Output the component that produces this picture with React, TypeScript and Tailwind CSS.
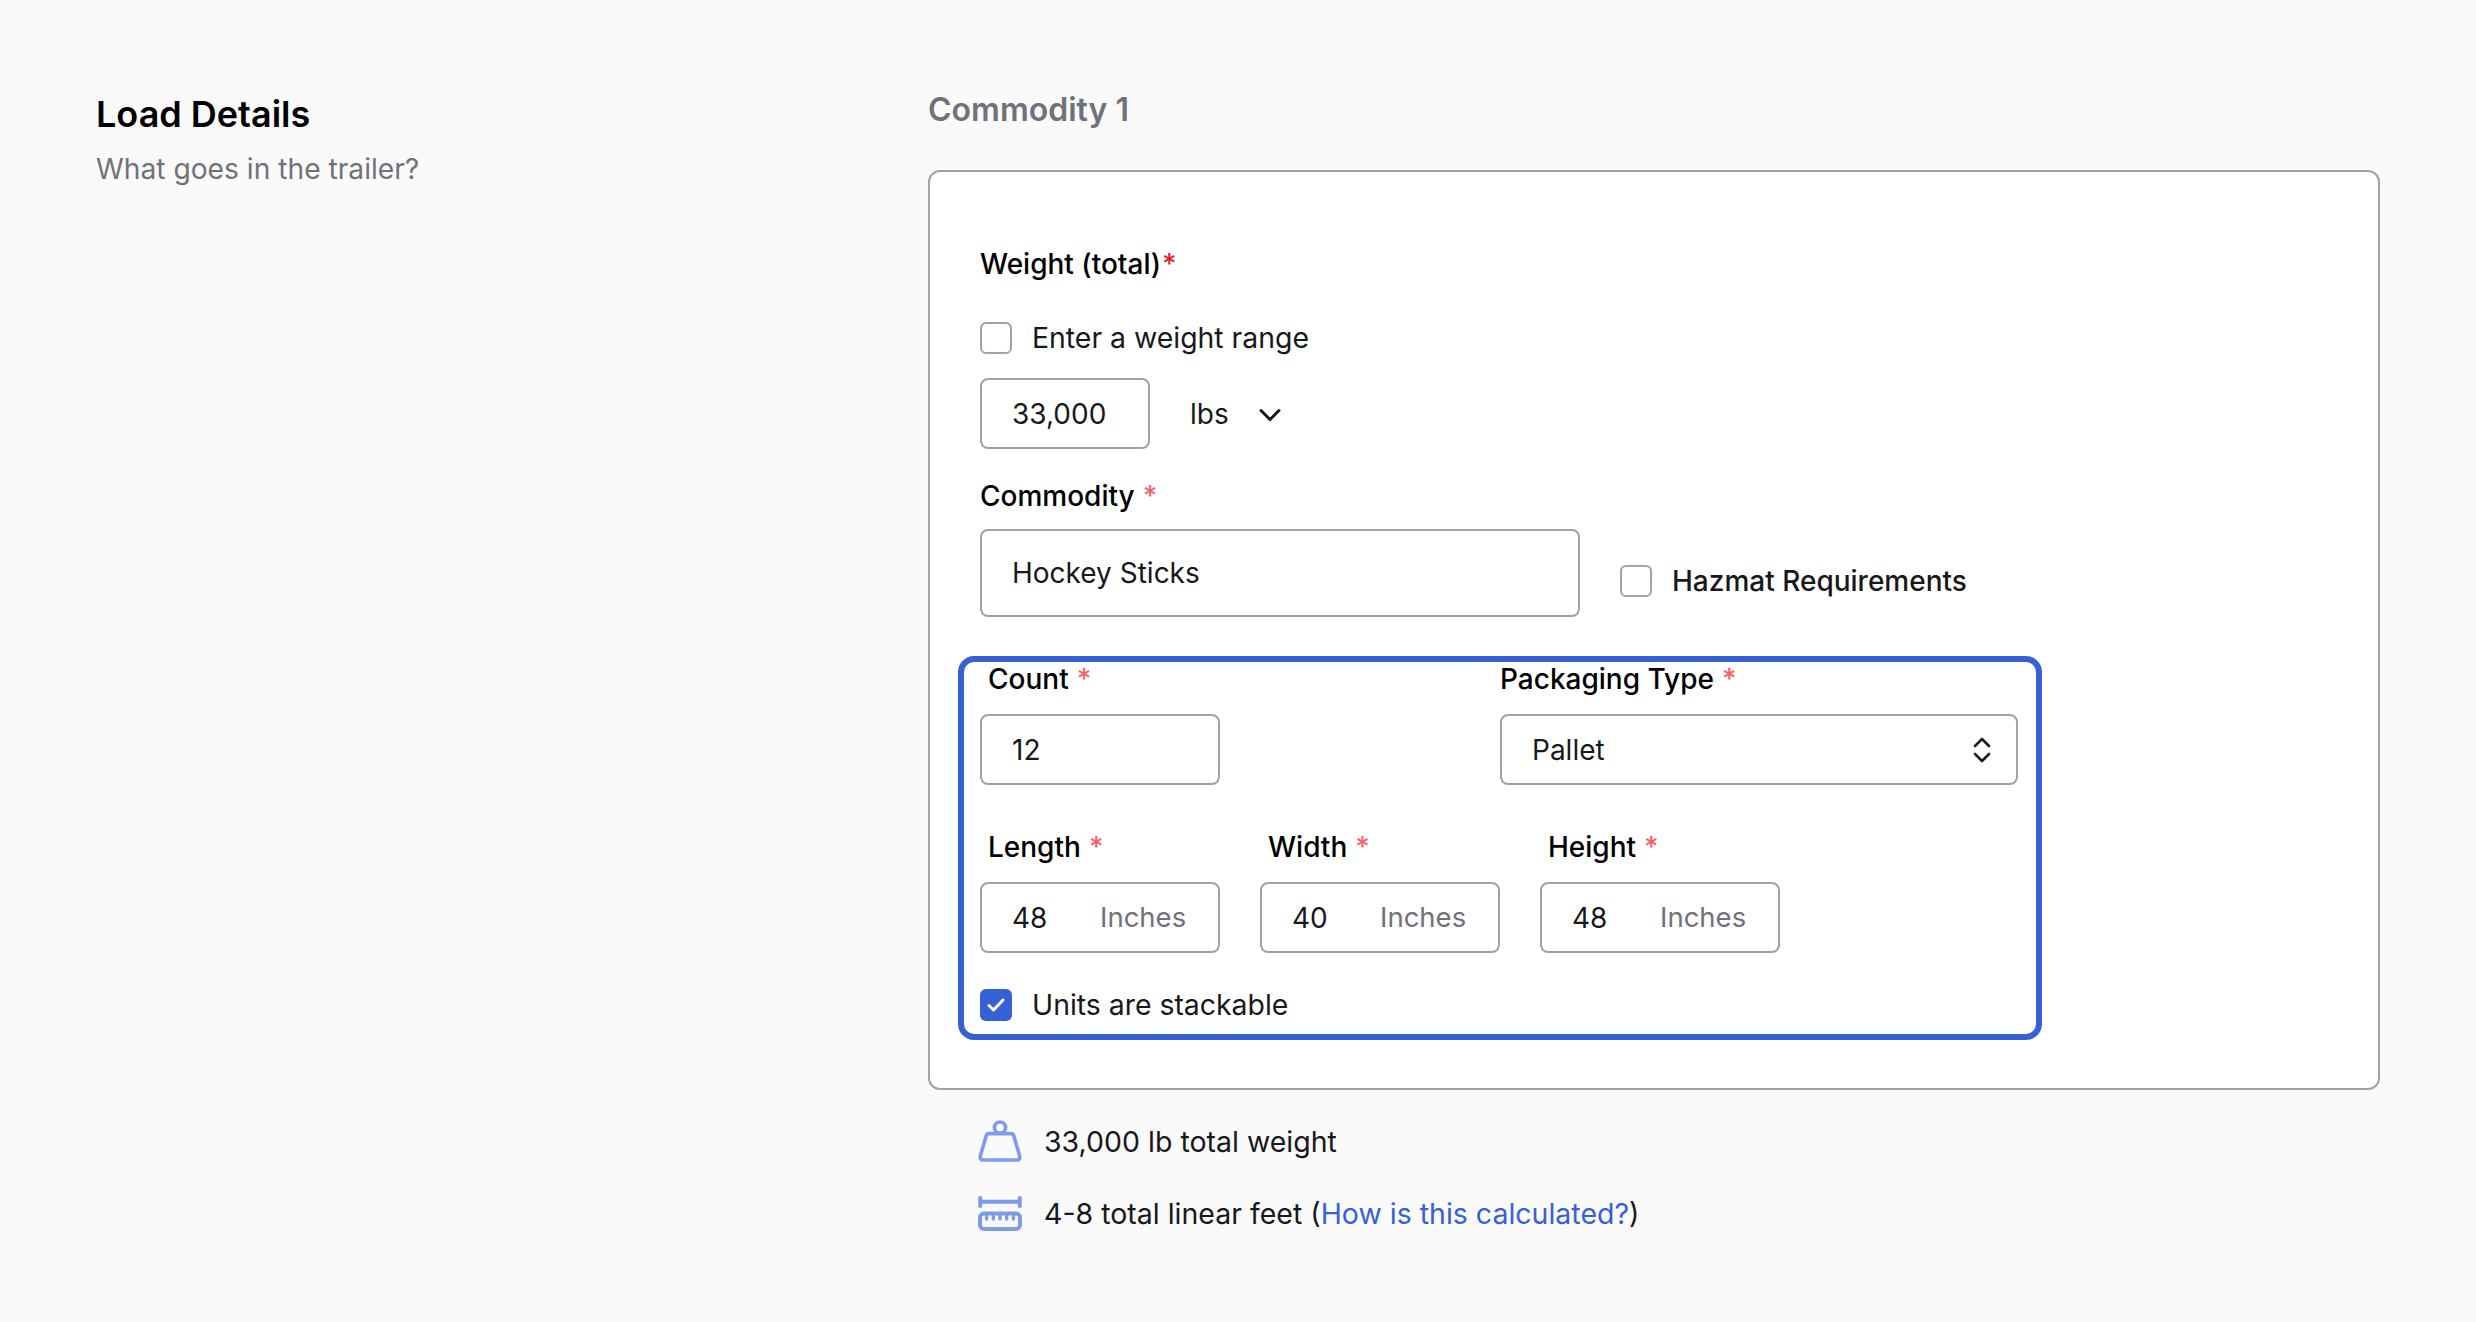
import React from "react";

function Req({ tight }: { tight?: boolean }) {
  return tight ? (
    <span className="ml-[1px] text-[#e11d2a]">*</span>
  ) : (
    <span className="ml-2 text-[#fb6068]">*</span>
  );
}

function Label({ text, className = "" }: { text: string; className?: string }) {
  return (
    <div className={`h-[35px] pl-[8px] text-[28px] leading-[35px] font-medium text-black ${className}`}>
      {text}
      <Req />
    </div>
  );
}

function Box({ value, className = "" }: { value: string; className?: string }) {
  return (
    <div className={`flex items-center rounded-lg border-2 border-[#a1a1aa] bg-white pl-[30px] text-[28px] text-[#18181b] ${className}`}>
      {value}
    </div>
  );
}

function Dim({ label, value, last }: { label: string; value: string; last?: boolean }) {
  return (
    <div className={last ? "w-[240px]" : "mr-[40px] w-[240px]"}>
      <Label text={label} />
      <div className="mt-[17px] flex h-[71px] items-center rounded-lg border-2 border-[#a1a1aa] bg-white pl-[30px] text-[28px] text-[#18181b]">
        <span className="w-[88px]">{value}</span>
        <span className="text-[27.5px] text-[#71717a]">Inches</span>
      </div>
    </div>
  );
}

function Check({ checked }: { checked?: boolean }) {
  if (checked) {
    return (
      <span className="flex h-[32px] w-[32px] shrink-0 items-center justify-center rounded-md bg-[#3661d6]">
        <svg width="20" height="16" viewBox="0 0 20 16" fill="none">
          <path d="M3 8.5L7.5 13L17 3" stroke="white" strokeWidth="3" strokeLinecap="round" strokeLinejoin="round" />
        </svg>
      </span>
    );
  }
  return <span className="h-[32px] w-[32px] shrink-0 rounded-md border-2 border-[#a1a1aa] bg-white" />;
}

function WeightIcon() {
  return (
    <svg width="44" height="44" viewBox="0 0 44 44" fill="none" stroke="#7c9be8" strokeWidth="3.6" strokeLinejoin="round">
      <circle cx="22" cy="7.6" r="5.6" />
      <path d="M11 13.6H33C34.4 13.6 35.4 14.4 35.8 15.8L41.7 36C42.4 38.2 41 40 38.8 40H5.2C3 40 1.6 38.2 2.3 36L8.2 15.8C8.6 14.4 9.6 13.6 11 13.6Z" />
    </svg>
  );
}

function RulerIcon() {
  return (
    <svg width="44" height="36" viewBox="0 0 44 36" fill="none" stroke="#7c9be8" strokeWidth="4" strokeLinecap="round" strokeLinejoin="round">
      <path d="M2.2 2V10M41.8 2V10M2.2 5.8H41.8" />
      <rect x="2" y="17.5" width="40" height="15.5" rx="4" />
      <path d="M8.6 18.5V23M15.3 18.5V23M22 18.5V23M28.7 18.5V23M35.4 18.5V23" strokeWidth="3.4" />
    </svg>
  );
}

export default function App() {
  return (
    <div className="flex min-h-[1322px] bg-[#fafafa] pl-[96px] font-['Inter',sans-serif]">
      <div className="w-[832px] pt-[90px]">
        <h2 className="text-[36px] leading-[48px] font-semibold text-black">Load Details</h2>
        <p className="mt-[11px] text-[28.2px] leading-[40px] text-[#71717a]">What goes in the trailer?</p>
      </div>

      <div className="w-[1452px] pt-[89px]">
        <h3 className="text-[32px] leading-[42px] font-semibold text-[#71717a]">Commodity 1</h3>

        <div className="mt-[39px] h-[920px] rounded-xl border-2 border-[#a1a1aa] bg-white pt-[72px] pl-[50px]">
          <div className="text-[28px] leading-[40px] font-medium text-black">
            Weight (total)
            <Req tight />
          </div>

          <label className="mt-[38px] flex items-center gap-[20px] text-[28.4px] leading-[32px] text-[#18181b]">
            <Check />
            Enter a weight range
          </label>

          <div className="mt-[24px] flex items-center">
            <Box value="33,000" className="h-[71px] w-[170px]" />
            <span className="ml-[40px] text-[28px] text-[#18181b]">lbs</span>
            <svg className="mt-[2px] ml-[30px]" width="22" height="14" viewBox="0 0 22 14" fill="none">
              <path d="M2 2.5L11 11.5L20 2.5" stroke="#18181b" strokeWidth="3" strokeLinecap="round" strokeLinejoin="round" />
            </svg>
          </div>

          <div className="mt-[27px] text-[28px] leading-[40px] font-medium text-black">
            Commodity
            <Req />
          </div>

          <div className="mt-[13px] flex items-start">
            <Box value="Hockey Sticks" className="h-[88px] w-[600px]" />
            <label className="mt-[36px] ml-[40px] flex items-center gap-[20px] text-[28px] leading-[32px] font-medium text-[#18181b]">
              <Check />
              Hazmat Requirements
            </label>
          </div>

          <div className="mt-[39px] -ml-[22px] h-[384px] w-[1084px] rounded-2xl border-[6px] border-[#3661d6] pl-[16px]">
            <div className="flex">
              <div className="mr-[280px] w-[240px]">
                <Label text="Count" />
                <Box value="12" className="mt-[17px] h-[71px]" />
              </div>
              <div className="w-[518px]">
                <div className="h-[35px] text-[28px] leading-[35px] font-medium text-black">
                  Packaging Type
                  <Req />
                </div>
                <div className="mt-[17px] flex h-[71px] items-center justify-between rounded-lg border-2 border-[#a1a1aa] bg-white pr-[25px] pl-[30px] text-[28px] text-[#18181b]">
                  Pallet
                  <svg width="18" height="26" viewBox="0 0 18 26" fill="none">
                    <path d="M2 9L9 2L16 9M2 17L9 24L16 17" stroke="#18181b" strokeWidth="2.6" strokeLinecap="round" strokeLinejoin="round" />
                  </svg>
                </div>
              </div>
            </div>

            <div className="mt-[45px] flex">
              <Dim label="Length" value="48" />
              <Dim label="Width" value="40" />
              <Dim label="Height" value="48" last />
            </div>

            <label className="mt-[36px] flex items-center gap-[20px] text-[28.4px] leading-[32px] text-[#18181b]">
              <Check checked />
              Units are stackable
            </label>
          </div>
        </div>

        <div className="mt-[30px] flex h-[44px] items-center pl-[50px] text-[28.5px] text-[#18181b]">
          <WeightIcon />
          <span className="ml-[22px]">33,000 lb total weight</span>
        </div>
        <div className="mt-[28px] flex h-[44px] items-center pl-[50px] text-[28.5px] text-[#18181b]">
          <RulerIcon />
          <span className="ml-[22px]">
            4-8 total linear feet (<a className="text-[#3661d6]">How is this calculated?</a>)
          </span>
        </div>
      </div>
    </div>
  );
}
